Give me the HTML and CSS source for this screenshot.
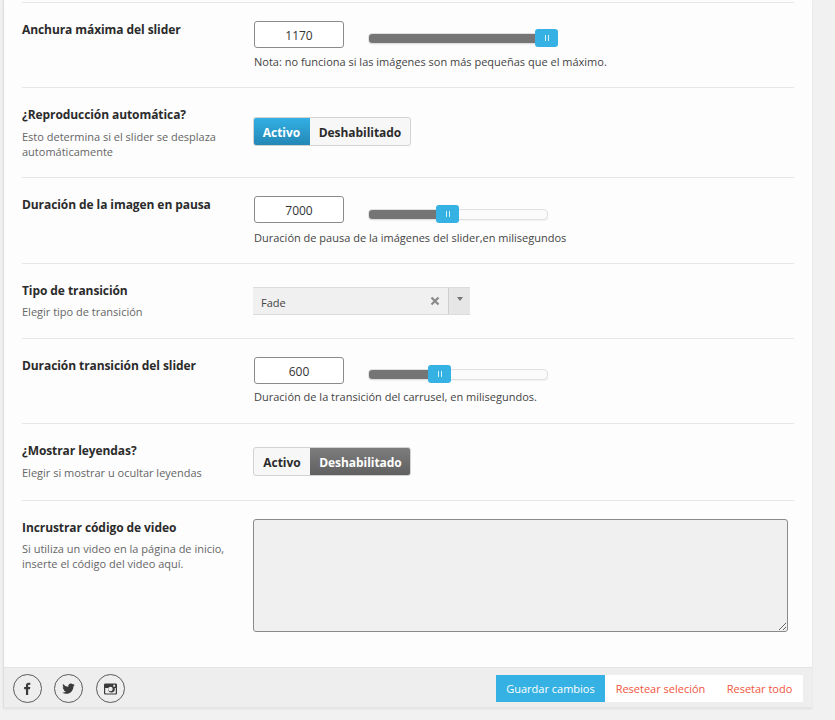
FILE: index.html
```html
<!DOCTYPE html>
<html lang="es">
<head>
<meta charset="utf-8">
<title>Opciones del slider</title>
<link rel="stylesheet" href="styles.css">
</head>
<body>
<div class="panel">
  <div class="rows">
    <section class="row row-a">
      <div class="label"><h3>Anchura máxima del slider</h3></div>
      <div class="control">
        <div class="slider-line">
          <input class="num" type="text" value="1170">
          <div class="track"><div class="fill fill-max"></div><div class="handle"><i></i><i></i></div></div>
        </div>
        <p class="note">Nota: no funciona si las imágenes son más pequeñas que el máximo.</p>
      </div>
    </section>
    <section class="row row-b">
      <div class="label"><h3>¿Reproducción automática?</h3><p>Esto determina si el slider se desplaza automáticamente</p></div>
      <div class="control toggle-wrap">
        <div class="toggle"><span class="opt opt-first on-blue">Activo</span><span class="opt opt-second">Deshabilitado</span></div>
      </div>
    </section>
    <section class="row row-c">
      <div class="label"><h3>Duración de la imagen en pausa</h3></div>
      <div class="control">
        <div class="slider-line">
          <input class="num" type="text" value="7000">
          <div class="track"><div class="fill fill-pause"></div><div class="handle"><i></i><i></i></div></div>
        </div>
        <p class="note">Duración de pausa de la imágenes del slider,en milisegundos</p>
      </div>
    </section>
    <section class="row row-d">
      <div class="label"><h3>Tipo de transición</h3><p>Elegir tipo de transición</p></div>
      <div class="control">
        <div class="select">
          <span class="select-value">Fade</span>
          <svg class="select-x" width="10" height="10" viewBox="0 0 10 10"><path d="M1.500 1.500l7 7M8.500 1.500l-7 7" stroke="#888" stroke-width="2.200" fill="none"/></svg>
          <span class="select-arrow"><b></b></span>
        </div>
      </div>
    </section>
    <section class="row row-e">
      <div class="label"><h3>Duración transición del slider</h3></div>
      <div class="control">
        <div class="slider-line">
          <input class="num" type="text" value="600">
          <div class="track"><div class="fill fill-trans"></div><div class="handle"><i></i><i></i></div></div>
        </div>
        <p class="note">Duración de la transición del carrusel, en milisegundos.</p>
      </div>
    </section>
    <section class="row row-f">
      <div class="label"><h3>¿Mostrar leyendas?</h3><p>Elegir si mostrar u ocultar leyendas</p></div>
      <div class="control toggle-wrap">
        <div class="toggle"><span class="opt opt-first">Activo</span><span class="opt opt-second on-grey">Deshabilitado</span></div>
      </div>
    </section>
    <section class="row row-g">
      <div class="label"><h3>Incrustrar código de video</h3><p>Si utiliza un video en la página de inicio, inserte el código del video aquí.</p></div>
      <div class="control"><textarea class="code"></textarea></div>
    </section>
  </div>
  <footer class="foot">
    <div class="social">
      <a class="circle"><svg width="11" height="13" viewBox="2 0 11 16"><path fill="#3a3a3a" d="M5.600 16V8.900H3.400V6.300h2.200V4.500C5.600 2.200 7 1 9 1c.9 0 1.700.1 2 .1v2.400H9.600c-1.100 0-1.300.5-1.300 1.300v1.500h2.600l-.4 2.600H8.300V16z"/></svg></a>
      <a class="circle"><svg width="13" height="11" viewBox="0 0 16 14"><path fill="#3a3a3a" d="M16 2.200c-.6.3-1.200.4-1.900.5.7-.4 1.200-1 1.400-1.800-.6.4-1.300.7-2.100.8C12.800 1 12 .6 11 .6 9.200.6 7.700 2.100 7.700 3.900c0 .3 0 .5.1.8C5.100 4.500 2.700 3.200 1.100 1.200.800 1.700.7 2.300.7 2.900c0 1.100.6 2.100 1.500 2.700-.5 0-1-.2-1.500-.4v.1c0 1.600 1.100 2.900 2.600 3.200-.3.1-.6.100-.9.100-.2 0-.4 0-.6-.1.400 1.300 1.600 2.300 3.100 2.300C3.700 11.700 2.200 12.300.8 12.300c-.3 0-.5 0-.8 0 1.500.9 3.200 1.500 5 1.500 6 0 9.300-5 9.300-9.300v-.4c.7-.5 1.300-1.100 1.700-1.900z"/></svg></a>
      <a class="circle circle-last"><svg width="13" height="12" viewBox="0 1 14 12"><path fill="#3a3a3a" fill-rule="evenodd" d="M1.500 1h11c.8 0 1.500.7 1.500 1.500v9c0 .8-.7 1.500-1.500 1.500h-11C.7 13 0 12.300 0 11.500v-9C0 1.700.7 1 1.500 1zM10 2.500v2h2v-2zM7 4.700a2.400 2.400 0 1 0 0 4.800 2.400 2.400 0 0 0 0-4.800zM1.300 6v5.300c0 .3.200.5.500.5h10.400c.3 0 .5-.2.500-.5V6h-1.300c.2.400.2.700.2 1.100a3.600 3.600 0 1 1-7.200 0c0-.4 0-.7.200-1.100z"/></svg></a>
    </div>
    <div class="actions">
      <button class="btn btn-save" type="button">Guardar cambios</button>
      <button class="btn btn-select" type="button">Resetear seleción</button>
      <button class="btn btn-all" type="button">Resetar todo</button>
    </div>
  </footer>
</div>
</body>
</html>
```
FILE: styles.css
```css
* { box-sizing: border-box; }
html, body { height: 100%; }
body {
  margin: 0;
  background: #f1f1f1;
  font-family: "Open Sans", "Noto Sans", sans-serif;
  font-size: 11px;
  color: #3c3c3c;
  overflow: hidden;
}
.panel {
  width: 809px;
  margin-left: 3px;
  background: #fdfdfd;
  border-left: 1px solid #dedede;
  box-shadow: 0 1px 2px rgba(0,0,0,.08);
}
.rows { padding: 2px 18px 0 18px; height: 667px; }
.row {
  display: grid;
  grid-template-columns: 231px 1fr;
  border-top: 1px solid #e6e6e6;
  padding-top: 18px;
}
.row-a { height: 85px; }
.row-b { height: 90px; }
.row-c { height: 86px; }
.row-d { height: 75px; }
.row-e { height: 85px; }
.row-f { height: 77px; }
.label h3 {
  margin: 0;
  font-size: 12px;
  letter-spacing: -0.08px;
  line-height: 18px;
  font-weight: 700;
  color: #2b2b2b;
}
.label p {
  margin: 4px 0 0;
  width: 215px;
  font-size: 11px;
  line-height: 15px;
  color: #666;
}
.row-b .label p { margin-top: 5px; }
.row-f .label p { margin-top: 5px; }
.slider-line { display: flex; align-items: center; height: 27px; }
.num {
  width: 90px;
  height: 27px;
  margin-left: 1px;
  border: 1px solid #8a8a8a;
  border-radius: 3px;
  background: #fff;
  text-align: center;
  font: 12px "Open Sans", "Noto Sans", sans-serif;
  color: #333;
  padding: 1px 0 0;
}
.track {
  position: relative;
  width: 180px;
  height: 11px;
  margin: 8px 0 0 24px;
  background: #fbfbfb;
  border: 1px solid #e0e0e0;
  border-radius: 4px;
  box-shadow: 0 1px 1px rgba(0,0,0,.05);
}
.row-c .track { margin-top: 10px; }
.fill { height: 100%; background: #757575; border-radius: 3px 0 0 3px; }
.fill-max { width: 168px; }
.fill-pause { width: 69px; }
.fill-trans { width: 61px; }
.handle {
  position: absolute;
  top: -5px;
  margin-left: -1px;
  width: 23px;
  height: 18px;
  background: #35b2e3;
  border-radius: 3px;
  display: flex;
  justify-content: center;
  align-items: center;
  gap: 2px;
}
.handle i { width: 1px; height: 6px; background: #d9f1fb; }
.fill-max + .handle { left: 167px; }
.fill-pause + .handle { left: 68px; }
.fill-trans + .handle { left: 60px; }
.note {
  margin: 6px 0 0 1px;
  font-size: 11px;
  line-height: 16px;
  color: #444;
}
.row-c .note { margin-top: 7px; }
.row-e .note { margin-top: 5px; }
.toggle-wrap { padding-top: 11px; }
.row-f .toggle-wrap { padding-top: 5px; }
.toggle {
  display: inline-flex;
  height: 29px;
  width: 158px;
  border: 1px solid #d2d2d2;
  border-radius: 3px;
  background: #f7f7f7;
  overflow: hidden;
}
.opt {
  display: flex;
  align-items: center;
  justify-content: center;
  padding-top: 1px;
  font-size: 12px;
  letter-spacing: -0.05px;
  font-weight: 700;
  color: #2b2b2b;
}
.opt-first { width: 56px; }
.opt-second { width: 100px; }
.on-blue { background: linear-gradient(#33b1e6, #2386b4); color: #fff; margin: -1px 0 -1px -1px; width: 57px; }
.on-grey { background: linear-gradient(#7e7e7e, #5f5f5f); color: #fff; margin: -1px -1px -1px 0; width: 101px; }
.select {
  display: flex;
  align-items: center;
  width: 217px;
  height: 28px;
  margin-top: 5px;
  background: #f0f0f0;
  border-top: 1px solid #dcdcdc;
  border-bottom: 1px solid #dcdcdc;
}
.select-value { flex: 1; padding-left: 8px; font-size: 11px; color: #444; position: relative; top: 1px; }
.select-x { margin-right: 8px; }
.select-arrow {
  width: 22px;
  height: 100%;
  background: #e6e6e6;
  border-left: 1px solid #cfcfcf;
  display: flex;
  align-items: center;
  justify-content: center;
}
.select-arrow b {
  width: 0;
  height: 0;
  margin-bottom: 4px;
  border: 3.5px solid transparent;
  border-top: 4px solid #777;
  border-bottom: 0;
}
.code {
  display: block;
  width: 535px;
  height: 113px;
  background: #f0f0f0;
  border: 1px solid #8a8a8a;
  border-radius: 3px;
  resize: both;
}
.foot {
  display: flex;
  justify-content: space-between;
  align-items: center;
  height: 41px;
  padding: 2px 9px 0;
  background: #eeeeee;
  border-top: 1px solid #e4e4e4;
  border-bottom: 1px solid #e6e6e6;
}
.social { display: flex; gap: 12px; }
.circle {
  width: 29px;
  height: 29px;
  border: 1px solid #5a5a5a;
  border-radius: 50%;
  display: flex;
  align-items: center;
  justify-content: center;
}
.circle-last { margin-left: 1px; }
.actions { display: flex; background: #fff; }
.btn {
  height: 27px;
  border: 0;
  padding: 0;
  background: transparent;
  font: 11px "Open Sans", "Noto Sans", sans-serif;
  color: #f0553d;
}
.btn-save { background: #35b2e3; color: #fff; width: 109px; }
.btn-select { width: 111px; }
.btn-all { width: 87px; }
```
